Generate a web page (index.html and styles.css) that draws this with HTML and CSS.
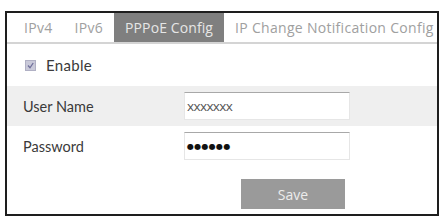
FILE: index.html
```html
<!DOCTYPE html>
<html>
<head>
<meta charset="utf-8">
<link rel="stylesheet" href="styles.css">
</head>
<body>
<div class="panel">
  <div class="tabs">
    <div class="tab">IPv4</div>
    <div class="tab">IPv6</div>
    <div class="tab active">PPPoE Config</div>
    <div class="tab">IP Change Notification Config</div>
  </div>
  <div class="enable-row">
    <span class="checkbox"><svg viewBox="0 0 9 9" width="9" height="9"><path d="M2 4.5 L4 6.8 L7.2 2" fill="none" stroke="#6f6f9a" stroke-width="1.3"/></svg></span>
    <span class="enable-label">Enable</span>
  </div>
  <div class="row shaded">
    <span class="label">User Name</span>
    <div class="input">xxxxxxx</div>
  </div>
  <div class="row">
    <span class="label">Password</span>
    <div class="input pw">●●●●●●</div>
  </div>
  <div class="actions">
    <div class="btn">Save</div>
  </div>
</div>
</body>
</html>
```
FILE: styles.css
```css
html, body {
  margin: 0;
  padding: 0;
  background: #fff;
}
body {
  font-family: "Open Sans", "Noto Sans", sans-serif;
  color: #333;
}
.panel {
  margin: 11px 0 0 5px;
  width: 430px;
  height: 201px;
  border: 2px solid #1e1e1e;
  display: flex;
  flex-direction: column;
}
.tabs {
  display: flex;
  height: 29px;
  border-bottom: 2px solid #d4d4d4;
  padding-left: 6px;
  align-items: stretch;
}
.tab {
  display: flex;
  align-items: center;
  padding: 0 11px;
  font-size: 14px;
  color: #a0a0a0;
  white-space: nowrap;
  letter-spacing: 0.3px;
}
.tab.active {
  background: #7f7f7f;
  color: #e6e6e6;
  letter-spacing: 0.1px;
}
.enable-row {
  height: 42px;
  display: flex;
  align-items: center;
  padding-left: 18px;
  gap: 10px;
}
.checkbox {
  width: 9px;
  height: 9px;
  background: #c9c9d9;
  border: 1px solid #b0b0c4;
  display: flex;
}
.enable-label {
  font-family: "Lato", sans-serif;
  font-size: 15px;
  color: #3a3a3a;
  letter-spacing: 0.3px;
}
.row {
  height: 40px;
  display: flex;
  align-items: center;
  padding-left: 16px;
}
.row.shaded {
  background: #efefef;
}
.label {
  width: 161px;
  font-family: "Lato", sans-serif;
  font-size: 14.5px;
  letter-spacing: 0px;
  color: #3a3a3a;
}
.input {
  width: 162px;
  height: 26px;
  background: #fff;
  border: 1px solid #e6e6e6;
  border-top-color: #a8a8a8;
  display: flex;
  align-items: center;
  padding-left: 2px;
  font-size: 13.5px;
  color: #555;
  letter-spacing: -0.6px;
}
.input.pw {
  font-family: "DejaVu Sans", sans-serif;
  font-size: 8px;
  color: #111;
  letter-spacing: 0.3px;
}
.actions {
  display: flex;
  padding: 13px 0 0 234px;
}
.btn {
  width: 104px;
  height: 30px;
  background: #9a9a9a;
  color: #ececec;
  font-size: 14px;
  display: flex;
  align-items: center;
  justify-content: center;
}
```
